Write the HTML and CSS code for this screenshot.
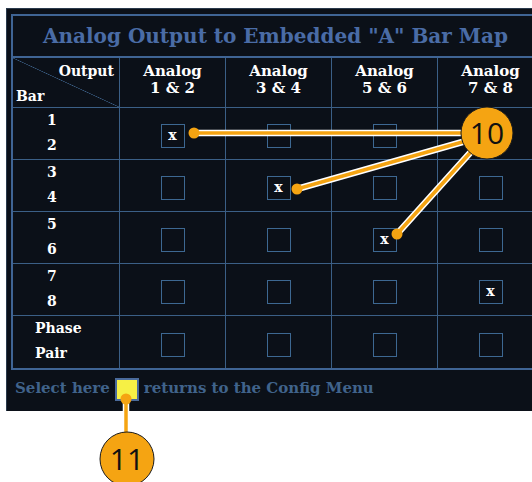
FILE: index.html
```html
<!DOCTYPE html>
<html lang="en">
<head>
  <meta charset="UTF-8" />
  <title>Analog Output to Embedded "A" Bar Map</title>
  <link rel="stylesheet" href="styles.css">
</head>
<body>
  <div class="panel">
    <div class="map">
      <div class="title">Analog Output to Embedded "A" Bar Map</div>
      <div class="grid">
        <div class="corner"><span class="out">Output</span><span class="bar">Bar</span></div>
        <div class="head">Analog<br>1 &amp; 2</div>
        <div class="head">Analog<br>3 &amp; 4</div>
        <div class="head">Analog<br>5 &amp; 6</div>
        <div class="head">Analog<br>7 &amp; 8</div>

        <div class="label">1<br>2</div>
        <div class="cell"><span class="box">x</span></div>
        <div class="cell"><span class="box"></span></div>
        <div class="cell"><span class="box"></span></div>
        <div class="cell"><span class="box"></span></div>

        <div class="label">3<br>4</div>
        <div class="cell"><span class="box"></span></div>
        <div class="cell"><span class="box">x</span></div>
        <div class="cell"><span class="box"></span></div>
        <div class="cell"><span class="box"></span></div>

        <div class="label">5<br>6</div>
        <div class="cell"><span class="box"></span></div>
        <div class="cell"><span class="box"></span></div>
        <div class="cell"><span class="box">x</span></div>
        <div class="cell"><span class="box"></span></div>

        <div class="label">7<br>8</div>
        <div class="cell"><span class="box"></span></div>
        <div class="cell"><span class="box"></span></div>
        <div class="cell"><span class="box"></span></div>
        <div class="cell"><span class="box">x</span></div>

        <div class="label phase">Phase<br>Pair</div>
        <div class="cell"><span class="box"></span></div>
        <div class="cell"><span class="box"></span></div>
        <div class="cell"><span class="box"></span></div>
        <div class="cell"><span class="box"></span></div>
      </div>
    </div>
    <div class="footer">Select here <span class="select"></span> returns to the Config Menu</div>
  </div>

  <!-- callouts -->
  <svg class="callouts" width="532" height="482" viewBox="0 0 532 482">
    <g stroke="#ffffff" stroke-width="6.5" stroke-linecap="round">
      <line x1="194" y1="133" x2="487" y2="133"/>
      <line x1="297" y1="189" x2="487" y2="135"/>
      <line x1="397" y1="234" x2="487" y2="134"/>
      <line x1="126" y1="399" x2="126" y2="440"/>
    </g>
    <g stroke="#f5a412" stroke-width="3.5" stroke-linecap="round">
      <line x1="194" y1="133" x2="487" y2="133"/>
      <line x1="297" y1="189" x2="487" y2="135"/>
      <line x1="397" y1="234" x2="487" y2="134"/>
      <line x1="126" y1="399" x2="126" y2="440"/>
    </g>
    <g fill="#f5a412">
      <circle cx="194" cy="133" r="5.5"/>
      <circle cx="297" cy="189" r="5.5"/>
      <circle cx="397" cy="234" r="5.5"/>
      <circle cx="126" cy="399" r="5.5"/>
    </g>
    <g fill="#f5a412" stroke="#1a1a1a" stroke-width="1">
      <circle cx="487" cy="133" r="26"/>
      <circle cx="127" cy="459" r="27"/>
    </g>
    <text x="487" y="144" class="num">10</text>
    <text x="127" y="470" class="num">11</text>
  </svg>
</body>
</html>
```

FILE: styles.css
```css
body {
  margin: 0;
  background: #ffffff;
  width: 532px;
  height: 482px;
  overflow: hidden;
  position: relative;
  font-family: "DejaVu Serif", "Liberation Serif", serif;
}
.panel {
  margin: 8px 0 0 6px;
  width: 545px;
  height: 403px;
  background: #0b1018;
  border-top: 1px solid #2a3a4c;
  border-left: 1px solid #2a3a4c;
  padding: 5px 0 0 4px;
  box-sizing: border-box;
}
.map {
  border: 2px solid #3f6494;
  border-right: none;
}
.title {
  height: 40px;
  line-height: 40px;
  padding-left: 30px;
  font-size: 20px;
  font-weight: bold;
  color: #4a6ca6;
  border-bottom: 2px solid #3f6494;
}
.grid {
  display: grid;
  grid-template-columns: 107px repeat(4, 106px);
  grid-template-rows: 50px repeat(5, 52px);
}
.grid > div {
  border-right: 1px solid #3b5f86;
  border-bottom: 1px solid #3b5f86;
  box-sizing: border-box;
  color: #ffffff;
  font-weight: bold;
}
.grid > div:nth-last-child(-n+5) {
  border-bottom: none;
}
.corner {
  position: relative;
  background: linear-gradient(to top right, transparent calc(50% - 0.6px), #3b5f86 50%, transparent calc(50% + 0.6px));
  font-size: 14px;
}
.corner .out {
  position: absolute;
  right: 5px;
  top: 5px;
}
.corner .bar {
  position: absolute;
  left: 3px;
  top: 30px;
}
.head {
  text-align: center;
  font-size: 15px;
  line-height: 17px;
  padding-top: 5px;
}
.label {
  font-size: 14px;
  line-height: 25px;
  padding-left: 34px;
}
.label.phase {
  padding-left: 22px;
}
.cell {
  display: flex;
  align-items: center;
  justify-content: center;
  padding-top: 5px;
}
.box {
  width: 24px;
  height: 24px;
  box-sizing: border-box;
  border: 1.5px solid #3d6892;
  display: flex;
  align-items: center;
  justify-content: center;
  font-size: 14px;
  font-weight: bold;
  color: #ffffff;
  padding-bottom: 3px;
}
.footer {
  padding: 4px 0 0 4px;
  font-size: 15px;
  font-weight: bold;
  color: #40638b;
  display: flex;
  align-items: center;
  gap: 5px;
  white-space: nowrap;
}
.select {
  width: 24px;
  height: 23px;
  box-sizing: border-box;
  background: #f6f045;
  border: 2px solid #4a6a9a;
  margin-top: 4px;
}
.callouts {
  position: absolute;
  left: 0;
  top: 0;
}
.num {
  font-family: "Open Sans", "DejaVu Sans", sans-serif;
  font-size: 30px;
  fill: #111111;
  text-anchor: middle;
}
```
